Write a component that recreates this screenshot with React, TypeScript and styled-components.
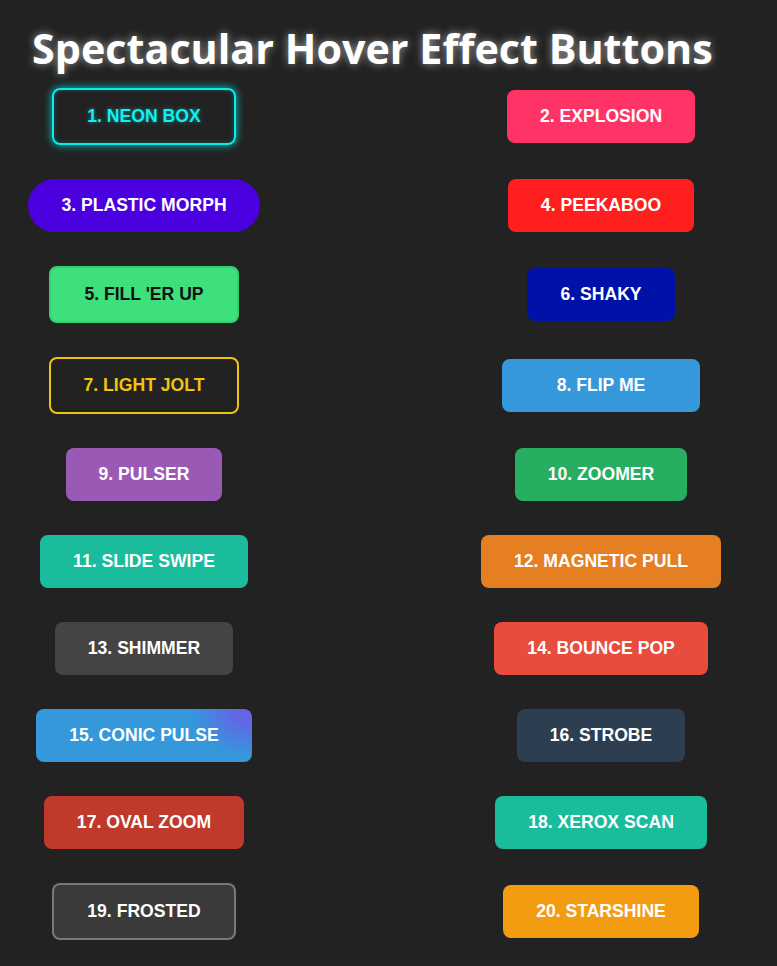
import React from "react";
import styled, { createGlobalStyle, css } from "styled-components";

const Global = createGlobalStyle`
  html, body {
    margin: 0;
    padding: 0;
    background: #222222;
  }
  body {
    font-family: "Liberation Sans", Arial, sans-serif;
    color: #fff;
  }
`;

const Page = styled.main`
  padding: 21px 20px 20px 20px;
  display: flex;
  flex-direction: column;
  gap: 13px;
`;

const Title = styled.h1`
  margin: 0 0 0 12px;
  font-family: "Open Sans", "Noto Sans", sans-serif;
  font-weight: 700;
  font-size: 41.3px;
  line-height: 54px;
  letter-spacing: 0;
  color: #ffffff;
  text-shadow: 0 0 8px rgba(255, 255, 255, 0.55);
`;

const Grid = styled.div`
  display: grid;
  grid-template-columns: 248px 248px;
  column-gap: 209px;
  row-gap: 34px;
  justify-items: center;
  align-items: center;
`;

type Variant =
  | "neon"
  | "solid"
  | "wide"
  | "outline"
  | "pill"
  | "conic"
  | "frosted";

const Btn = styled.button<{ $variant: Variant; $bg?: string; $fg?: string; $bd?: string }>`
  font-family: "Liberation Sans", Arial, sans-serif;
  font-weight: 700;
  font-size: 17.6px;
  line-height: 21px;
  padding: 16px 33px;
  border-radius: 8px;
  border: none;
  white-space: nowrap;
  background: ${(p) => p.$bg ?? "transparent"};
  color: ${(p) => p.$fg ?? "#ffffff"};
  cursor: pointer;

  ${(p) =>
    p.$variant === "neon" &&
    css`
      border: 2px solid #00f0f0;
      color: #12f0f0;
      box-shadow: 0 0 8px rgba(0, 255, 255, 0.75), inset 0 0 4px rgba(0, 255, 255, 0.25);
      text-shadow: 0 0 4px rgba(0, 255, 255, 0.45);
    `}
  ${(p) =>
    p.$variant === "wide" &&
    css`
      padding: 16px 55px;
    `}
  ${(p) =>
    p.$variant === "outline" &&
    css`
      border: 2px solid ${p.$bd};
    `}
  ${(p) =>
    p.$variant === "pill" &&
    css`
      border-radius: 30px;
    `}
  ${(p) =>
    p.$variant === "conic" &&
    css`
      background: radial-gradient(
          ellipse 62px 48px at 100% 0%,
          rgba(108, 92, 231, 1) 0%,
          rgba(108, 92, 231, 0.75) 35%,
          rgba(108, 92, 231, 0) 100%
        ),
        #3498db;
    `}
  ${(p) =>
    p.$variant === "frosted" &&
    css`
      border: 2px solid rgba(255, 255, 255, 0.32);
    `}
`;

type Item = { label: string; variant: Variant; bg?: string; fg?: string; bd?: string };

const items: Item[] = [
  { label: "1. NEON BOX", variant: "neon" },
  { label: "2. EXPLOSION", variant: "solid", bg: "#ff3366" },
  { label: "3. PLASTIC MORPH", variant: "pill", bg: "#4b00e0" },
  { label: "4. PEEKABOO", variant: "solid", bg: "#ff1f1f" },
  { label: "5. FILL 'ER UP", variant: "outline", bg: "#3de07a", fg: "#111111", bd: "#34d070" },
  { label: "6. SHAKY", variant: "solid", bg: "#0011a8" },
  { label: "7. LIGHT JOLT", variant: "outline", fg: "#f1c40f", bd: "#f1c40f" },
  { label: "8. FLIP ME", variant: "wide", bg: "#3498db" },
  { label: "9. PULSER", variant: "solid", bg: "#9b59b6" },
  { label: "10. ZOOMER", variant: "solid", bg: "#27ae60" },
  { label: "11. SLIDE SWIPE", variant: "solid", bg: "#1abc9c" },
  { label: "12. MAGNETIC PULL", variant: "solid", bg: "#e67e22" },
  { label: "13. SHIMMER", variant: "solid", bg: "#444444" },
  { label: "14. BOUNCE POP", variant: "solid", bg: "#e74c3c" },
  { label: "15. CONIC PULSE", variant: "conic" },
  { label: "16. STROBE", variant: "solid", bg: "#2c3e50" },
  { label: "17. OVAL ZOOM", variant: "solid", bg: "#c0392b" },
  { label: "18. XEROX SCAN", variant: "solid", bg: "#1abc9c" },
  { label: "19. FROSTED", variant: "frosted", bg: "#3a3a3a" },
  { label: "20. STARSHINE", variant: "solid", bg: "#f39c12" },
];

export default function App() {
  return (
    <>
      <Global />
      <Page>
        <Title>Spectacular Hover Effect Buttons</Title>
        <Grid>
          {items.map((it) => (
            <Btn key={it.label} $variant={it.variant} $bg={it.bg} $fg={it.fg} $bd={it.bd}>
              {it.label}
            </Btn>
          ))}
        </Grid>
      </Page>
    </>
  );
}
